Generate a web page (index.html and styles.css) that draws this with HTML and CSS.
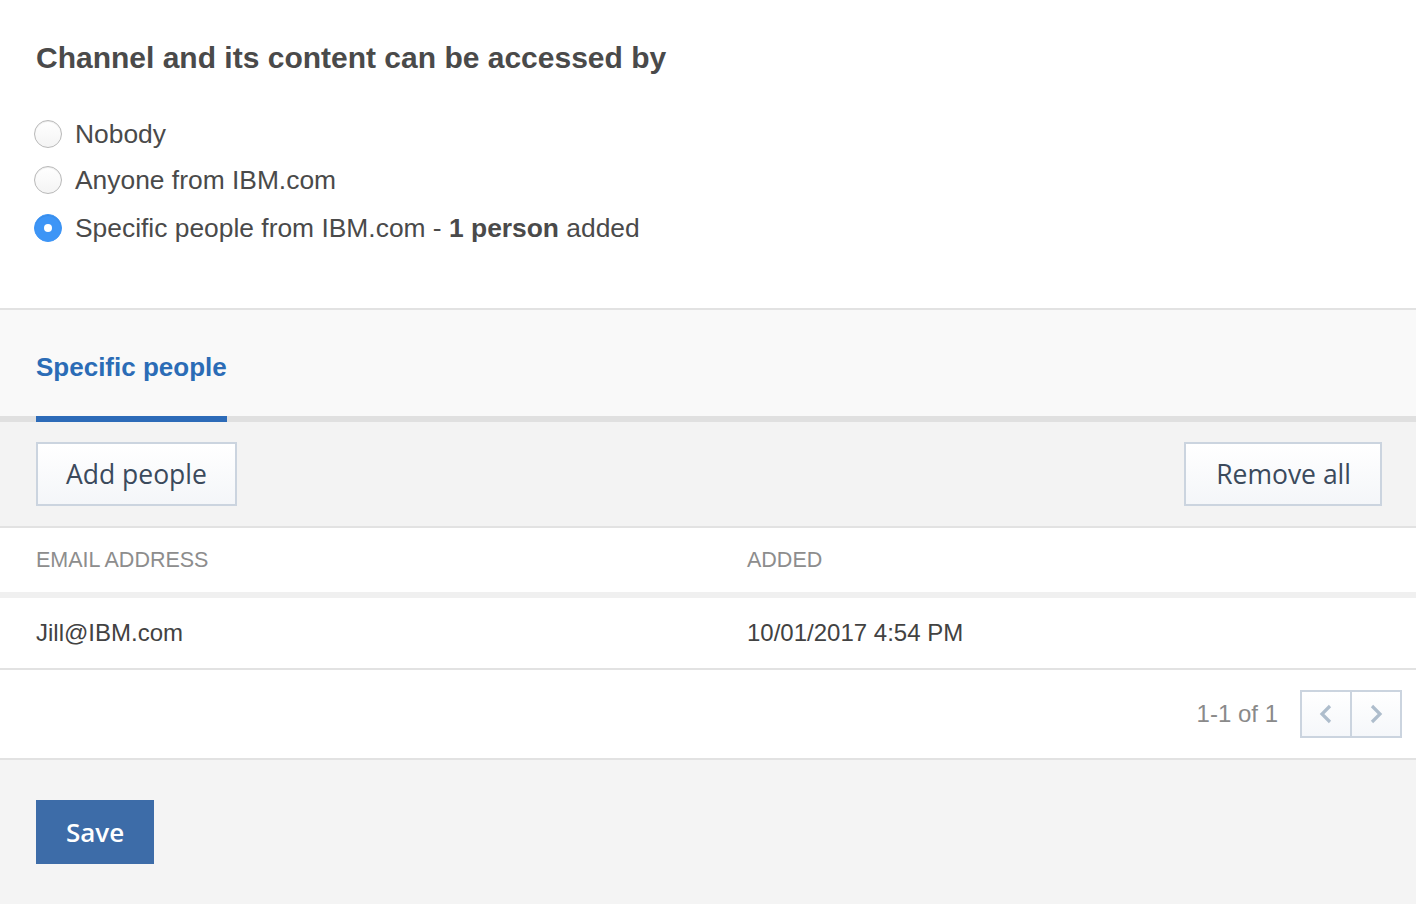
FILE: index.html
```html
<!DOCTYPE html>
<html>
<head>
<meta charset="utf-8">
<link rel="stylesheet" href="styles.css">
</head>
<body>
<section class="access">
  <h1 class="title">Channel and its content can be accessed by</h1>
  <div class="options">
    <label class="option"><span class="radio"></span><span>Nobody</span></label>
    <label class="option"><span class="radio"></span><span>Anyone from IBM.com</span></label>
    <label class="option"><span class="radio checked"></span><span>Specific people from IBM.com - <b>1 person</b> added</span></label>
  </div>
</section>
<section class="tabs">
  <div class="tab active">Specific people</div>
</section>
<div class="toolbar">
  <button class="btn">Add people</button>
  <button class="btn">Remove all</button>
</div>
<div class="table">
  <div class="row head">
    <div class="cell">EMAIL ADDRESS</div>
    <div class="cell">ADDED</div>
  </div>
  <div class="row body">
    <div class="cell">Jill@IBM.com</div>
    <div class="cell">10/01/2017 4:54 PM</div>
  </div>
</div>
<div class="pager">
  <span class="count">1-1 of 1</span>
  <div class="pager-btns">
    <span class="pbtn"><svg width="16" height="22" viewBox="0 0 16 22"><path d="M12 3 L4 11 L12 19" fill="none" stroke="#aebdcc" stroke-width="3.2"/></svg></span>
    <span class="pbtn"><svg width="16" height="22" viewBox="0 0 16 22"><path d="M4 3 L12 11 L4 19" fill="none" stroke="#aebdcc" stroke-width="3.2"/></svg></span>
  </div>
</div>
<footer class="footer">
  <button class="save">Save</button>
</footer>
</body>
</html>
```

FILE: styles.css
```css
html, body {
  margin: 0;
  padding: 0;
  background: #f4f4f4;
  font-family: "Liberation Sans", Arial, sans-serif;
}
.access {
  background: #fff;
  padding: 38px 36px 66px;
  border-bottom: 2px solid #e2e2e2;
}
.title {
  margin: 0;
  font-size: 30px;
  font-weight: bold;
  color: #4a4a4a;
  line-height: 40px;
}
.options {
  margin-top: 42px;
  display: flex;
  flex-direction: column;
  gap: 18px;
}
.option {
  display: flex;
  align-items: center;
  gap: 13px;
  font-size: 26.4px;
  color: #4a4a4a;
  line-height: 28px;
  margin-left: -2px;
}
.option:nth-child(3) { margin-top: 2px; }
.option b { font-weight: bold; }
.radio {
  width: 26px;
  height: 26px;
  border-radius: 50%;
  border: 1px solid #b9b9b9;
  background: linear-gradient(#fff, #f4f4f4);
  box-shadow: inset 0 1px 1px rgba(0,0,0,0.08);
  flex: none;
}
.radio.checked {
  border-color: #3d95f6;
  background: #3d95f6;
  position: relative;
}
.radio.checked::after {
  content: "";
  position: absolute;
  left: 9px;
  top: 9px;
  width: 8px;
  height: 8px;
  border-radius: 50%;
  background: #fff;
}
.tabs {
  background: #f9f9f9;
  padding: 0 36px;
  height: 106px;
  border-bottom: 6px solid #e0e0e0;
  display: flex;
  align-items: flex-end;
}
.tab {
  font-size: 26px;
  font-weight: bold;
  color: #2b6cb6;
  height: 106px;
  line-height: 114px;
  box-sizing: border-box;
  position: relative;
}
.tab.active::after {
  content: "";
  position: absolute;
  left: 0;
  right: 0;
  bottom: -6px;
  height: 6px;
  background: #2d6bb8;
}
.toolbar {
  background: #f3f3f3;
  padding: 20px 34px 20px 36px;
  display: flex;
  justify-content: space-between;
  border-bottom: 2px solid #e2e2e2;
}
.btn {
  height: 64px;
  padding: 0 28px;
  border: 2px solid #cbd4df;
  background: linear-gradient(#fff, #f4f6f9);
  font-family: "Open Sans", sans-serif;
  font-size: 26.5px;
  color: #3b4a5c;
  cursor: pointer;
}
.btn + .btn {
  padding: 0 29px 0 30px;
}
.table {
  background: #fff;
}
.row {
  display: grid;
  grid-template-columns: 711px 1fr;
  padding: 0 36px;
}
.row.head {
  height: 64px;
  align-items: center;
  font-size: 21.5px;
  color: #8d8d8d;
  border-bottom: 6px solid #f0f0f0;
}
.row.body {
  height: 70px;
  align-items: center;
  font-size: 24px;
  color: #424242;
  border-bottom: 2px solid #e2e2e2;
}
.pager {
  background: #fff;
  height: 88px;
  display: flex;
  align-items: center;
  justify-content: flex-end;
  padding-right: 14px;
  gap: 22px;
  border-bottom: 2px solid #e2e2e2;
}
.count {
  font-size: 24px;
  color: #8a8a8a;
}
.pager-btns {
  display: flex;
  border: 2px solid #cbd4df;
}
.pbtn {
  width: 48px;
  height: 44px;
  display: flex;
  align-items: center;
  justify-content: center;
  background: linear-gradient(#fff, #f5f7fa);
}
.pbtn + .pbtn {
  border-left: 2px solid #cbd4df;
}
.footer {
  padding: 40px 36px;
}
.save {
  width: 118px;
  height: 64px;
  border: none;
  background: #3d6ca8;
  color: #fff;
  font-family: "Open Sans", sans-serif;
  font-size: 26px;
  font-weight: 600;
  cursor: pointer;
}
```
